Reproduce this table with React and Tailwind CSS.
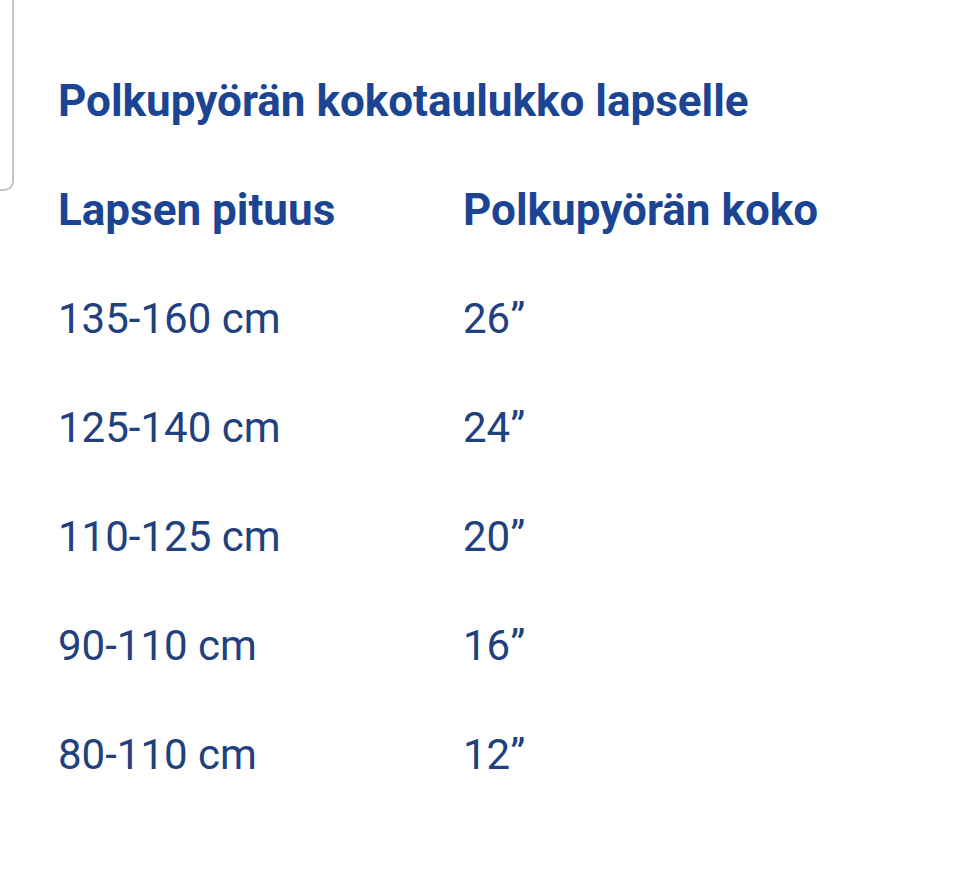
import React from 'react';

const rows = [
  ['135-160 cm', '26”'],
  ['125-140 cm', '24”'],
  ['110-125 cm', '20”'],
  ['90-110 cm', '16”'],
  ['80-110 cm', '12”'],
];

// Child bike size table
export default function App() {
  return (
    <div className="relative min-h-[871px] w-[953px] overflow-hidden bg-white font-['Roboto',sans-serif]">
      {/* edge of the panel above */}
      <div className="absolute left-[-20px] top-[-10px] h-[201px] w-[34px] rounded-br-[10px] border-b-2 border-r-2 border-[#c4c4c4]" />

      <div className="pl-[58px] pt-[46px]">
        <h2 className="flex h-[109px] items-center text-[44px] font-bold text-[#1b4593]">
          Polkupyörän kokotaulukko lapselle
        </h2>
        <div className="grid grid-cols-[405px_1fr]">
          <div className="flex h-[109px] items-center text-[44px] font-bold text-[#1b4593]">Lapsen pituus</div>
          <div className="flex h-[109px] items-center text-[44px] font-bold text-[#1b4593]">Polkupyörän koko</div>
          {rows.map(([h, s]) => (
            <React.Fragment key={h}>
              <div className="flex h-[109px] items-center text-[42px] text-[#21407e]">{h}</div>
              <div className="flex h-[109px] items-center text-[42px] text-[#21407e]">{s}</div>
            </React.Fragment>
          ))}
        </div>
      </div>
    </div>
  );
}
